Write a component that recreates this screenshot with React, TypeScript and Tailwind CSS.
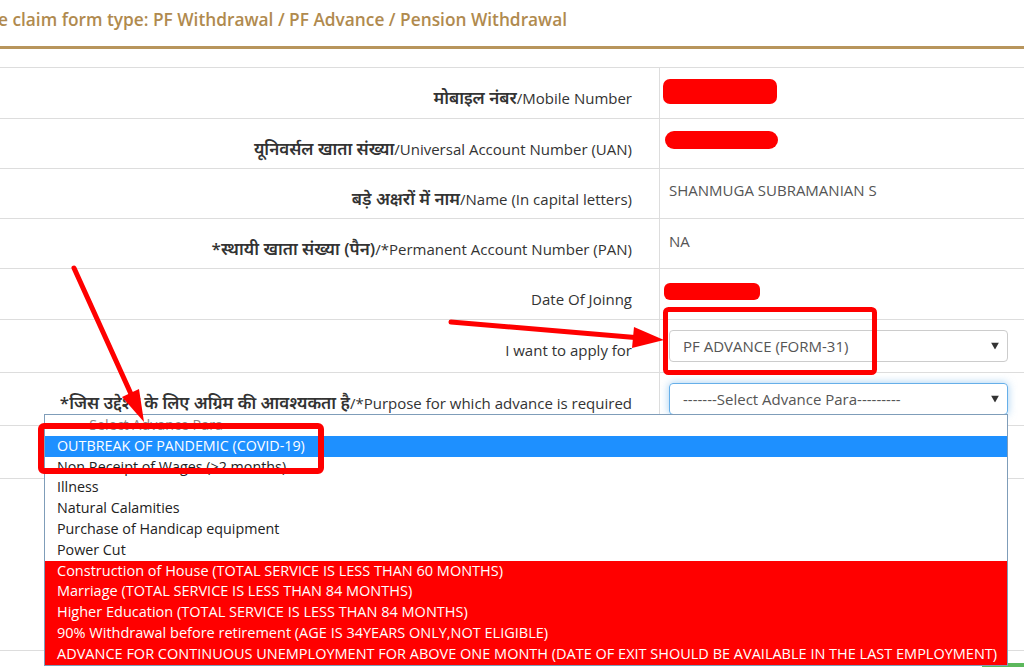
import React from "react";

const font = "font-['Open_Sans','Noto_Sans_Devanagari','Noto_Sans',sans-serif]";

function Caret() {
  return (
    <svg width="8" height="7" viewBox="0 0 8 7" className="absolute right-[8px] top-1/2 -translate-y-1/2">
      <polygon points="0,0 8,0 4,7" fill="#333" />
    </svg>
  );
}

function Row({
  h,
  hi,
  en,
  children,
  vpt = "pt-[11px]",
}: {
  h: string;
  hi?: string;
  en: string;
  children?: React.ReactNode;
  vpt?: string;
}) {
  return (
    <div className={`flex border-b border-[#ddd] ${h}`}>
      <div className="w-[660px] shrink-0 border-r border-[#ddd] pr-[27px] pt-[19px] text-right text-[15px] leading-[22px] text-[#333]">
        {hi && <span className="text-[17px] font-semibold">{hi}</span>}
        {en}
      </div>
      <div className={`flex-1 pl-[9px] pr-[16px] text-[15px] leading-[20px] text-[#555] ${vpt}`}>{children}</div>
    </div>
  );
}

const options = [
  "Non Receipt of Wages (>2 months)",
  "Illness",
  "Natural Calamities",
  "Purchase of Handicap equipment",
  "Power Cut",
];

const blocked = [
  "Construction of House (TOTAL SERVICE IS LESS THAN 60 MONTHS)",
  "Marriage (TOTAL SERVICE IS LESS THAN 84 MONTHS)",
  "Higher Education (TOTAL SERVICE IS LESS THAN 84 MONTHS)",
  "90% Withdrawal before retirement (AGE IS 34YEARS ONLY,NOT ELIGIBLE)",
  "ADVANCE FOR CONTINUOUS UNEMPLOYMENT FOR ABOVE ONE MONTH (DATE OF EXIT SHOULD BE AVAILABLE IN THE LAST EMPLOYMENT)",
];

export default function App() {
  return (
    <div className={`relative h-[667px] w-[1024px] overflow-hidden bg-white ${font}`}>
      <div className="h-[46px] pt-[8px]">
        <h2 className="ml-[-2px] whitespace-nowrap text-[17.3px] font-semibold leading-[24px] text-[#b08a4e]">
          e claim form type: PF Withdrawal / PF Advance / Pension Withdrawal
        </h2>
      </div>
      <div className="h-[3px] bg-[#b8955c]" />
      <div className="h-[18px]" />

      <div className="border-t border-[#ddd]">
        <Row h="h-[51px]" hi="मोबाइल नंबर" en="/Mobile Number" vpt="pt-[11px]">
          <div className="ml-[-6px] h-[25px] w-[114px] rounded-[7px] bg-[#ff0000]" />
        </Row>
        <Row h="h-[50px]" hi="यूनिवर्सल खाता संख्या" en="/Universal Account Number (UAN)" vpt="pt-[12px]">
          <div className="ml-[-4px] h-[18px] w-[113px] rounded-full bg-[#ff0000]" />
        </Row>
        <Row h="h-[50px]" hi="बड़े अक्षरों में नाम" en="/Name (In capital letters)">
          SHANMUGA SUBRAMANIAN S
        </Row>
        <Row h="h-[50px]" hi="*स्थायी खाता संख्या (पैन)" en="/*Permanent Account Number (PAN)" vpt="pt-[12px]">
          NA
        </Row>
        <Row h="h-[51px]" en="Date Of Joinng" vpt="pt-[14px]">
          <div className="ml-[-5px] h-[17px] w-[96px] rounded-[6px] bg-[#ff0000]" />
        </Row>
        <Row h="h-[53px]" en="I want to apply for" vpt="pt-[10px]">
          <div className="relative flex h-[32px] items-center rounded-[4px] border border-[#ccc] pl-[13px] text-[#555]">
            PF ADVANCE (FORM-31)
            <Caret />
          </div>
        </Row>
        <Row
          h="h-[53px]"
          hi="*जिस उद्देश्य के लिए अग्रिम की आवश्यकता है"
          en="/*Purpose for which advance is required"
          vpt="pt-[10px]"
        >
          <div className="relative flex h-[32px] items-center rounded-[4px] border border-[#66afe9] pl-[13px] text-[#555] shadow-[0_0_8px_rgba(102,175,233,0.6)]">
            -------Select Advance Para---------
            <Caret />
          </div>
        </Row>
        <div className="h-[53px] border-b border-[#ddd]" />
      </div>
      <div className="h-[172px] border-b border-[#ddd]" />
      <div className="flex justify-end pt-[12px]">
        <div className="h-[10px] w-[42px] bg-[#5cb85c]" />
      </div>

      {/* open select list */}
      <div className="absolute left-[44px] top-[414px] w-[964px] border border-[#7f9db9] bg-white text-[14.3px] text-[#222]">
        <div className="h-[20.8px] pl-[12px] leading-[20.8px] text-[#888]">-------Select Advance Para---------</div>
        <div className="h-[20.8px] bg-[#1e90ff] pl-[12px] leading-[20.8px] text-white">OUTBREAK OF PANDEMIC (COVID-19)</div>
        {options.map((o) => (
          <div key={o} className="h-[20.8px] pl-[12px] leading-[20.8px]">
            {o}
          </div>
        ))}
        {blocked.map((o) => (
          <div
            key={o}
            className="h-[20.8px] whitespace-nowrap bg-[#ff0000] pl-[12px] text-[14.5px] leading-[20.8px] text-white"
          >
            {o}
          </div>
        ))}
      </div>

      {/* annotations */}
      <svg className="pointer-events-none absolute left-0 top-0" width="1024" height="667">
        <g stroke="#ff0000" fill="none" strokeLinecap="round">
          <line x1="74" y1="268" x2="131" y2="394" strokeWidth="5" />
          <line x1="451" y1="322" x2="635" y2="337.5" strokeWidth="5" />
          <rect x="665.5" y="309.5" width="209" height="63" rx="3" strokeWidth="5" />
          <rect x="41" y="426" width="280" height="45" rx="3" strokeWidth="6" />
        </g>
        <g fill="#ff0000">
          <polygon points="144,422 122,397 139,389" />
          <polygon points="664,340 634,327 632,348" />
        </g>
      </svg>
    </div>
  );
}
